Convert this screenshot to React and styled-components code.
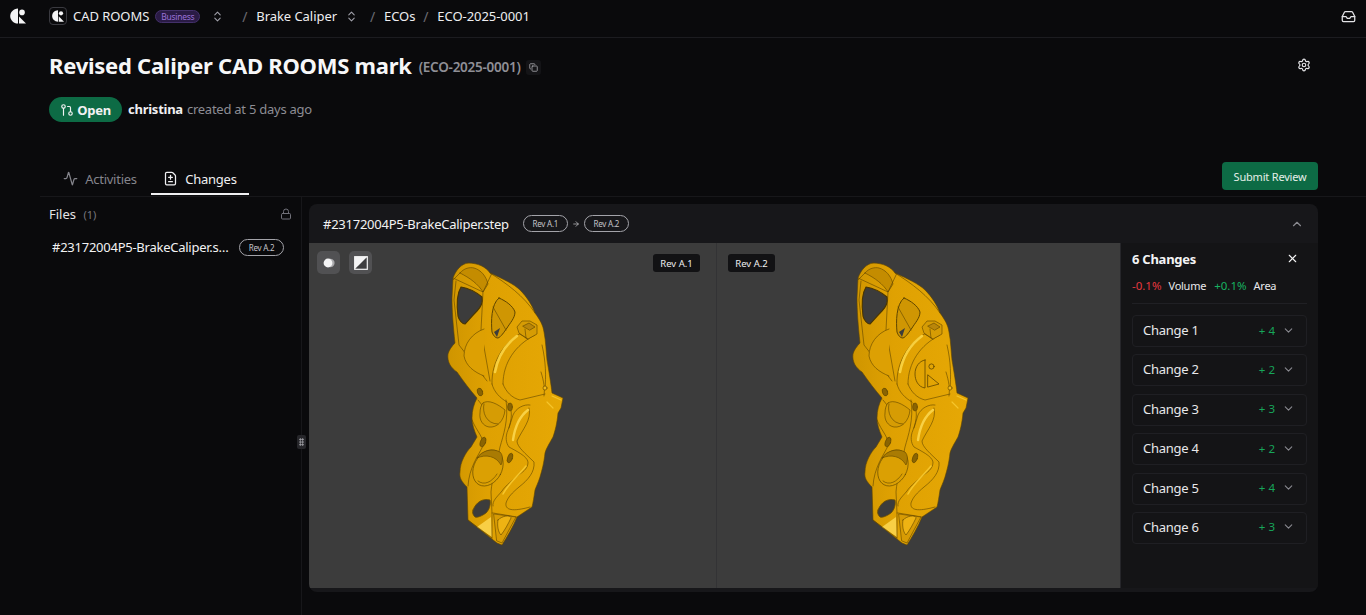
import React from 'react';
import styled, { createGlobalStyle } from 'styled-components';
import {
  Activity,
  ArrowRight,
  ChevronDown,
  ChevronUp,
  ChevronsUpDown,
  Copy,
  FileDiff,
  GitPullRequest,
  Inbox,
  Lock,
  Settings,
  X,
} from 'lucide-react';

const GlobalStyle = createGlobalStyle`
  html, body {
    margin: 0;
    height: 100%;
    background: #0a0a0c;
    overflow: hidden;
  }
  body {
    font-family: "Noto Sans", "Open Sans", sans-serif;
    letter-spacing: -0.25px;
    color: #f2f2f3;
  }
  * { box-sizing: border-box; }
`;

const changes = [
  { name: 'Change 1', count: 4 },
  { name: 'Change 2', count: 2 },
  { name: 'Change 3', count: 3 },
  { name: 'Change 4', count: 2 },
  { name: 'Change 5', count: 4 },
  { name: 'Change 6', count: 3 },
];

const Logo = ({ size = 16 }) => (
  <svg width={size} height={size} viewBox="0 0 16 16" fill="#f4f4f5">
    <path d="M8 0.4 V15.6 C3.4 15.4 0.2 12 0.2 8 C0.2 4 3.4 0.6 8 0.4 Z" />
    <circle cx="12" cy="4.4" r="2.8" />
    <path d="M9 8.4 L16 15.6 H9 Z" />
  </svg>
);

// the part is the same in both panes, the right one carries the engraved mark
const Caliper = ({ mark }) => (
  <svg width="130" height="292" viewBox="440 258 130 292">
    <defs>
      <linearGradient id="body" x1="0" y1="0" x2="1" y2="0">
        <stop offset="0" stopColor="#cf9500" />
        <stop offset="0.35" stopColor="#dfa102" />
        <stop offset="1" stopColor="#e6a805" />
      </linearGradient>
    </defs>
    <g stroke="#5f4500" strokeWidth="0.6" strokeLinejoin="round" strokeLinecap="round" fill="none">
      {/* outline */}
      <path
        fill="url(#body)"
        d="M468 263 C478 263 486 267 490 273 C503 279 514 284 520 290 C527 297 532 305 535 313 C540 320 543 325 544 332 C546 342 546 352 547 360 C549 372 551 384 552 393 L563 398 L561 408 L558 413 C557 424 555 431 553 437 C549 444 546 449 545 453 C544 463 542 470 540 477 C538 483 536 487 535 490 C534 497 533 503 532 507 L517 517 C513 527 507 537 502 545 L497 543 L468 520 L467 487 C462 482 459 478 460 472 C460 462 466 452 471 447 L477 437 C474 430 472 424 472 418 C472 410 474 404 477 398 C470 390 464 382 457 372 C451 368 447 362 448 354 C449 350 452 346 455 343 C453 325 452 310 452 298 L453 278 C456 270 461 264 468 263 Z"
      />
      {/* top strap */}
      <path fill="#c48c00" d="M460 273 C464 268 470 267 474 268 C481 270 486 276 488 284 L483 292 C478 284 470 278 460 273 Z" />
      <path d="M453 278 L483 292 L492 273 M456 281 L454 300 L459 345 L487 381 M483 292 L481 330 L490 381" />
      <path d="M460 273 L453 280" />
      <path d="M490 273 C506 283 524 296 535 313" />
      {/* window holes */}
      <path fill="#3c3c3c" stroke="#4a3600" strokeWidth="1.1" d="M461 287 C468 288 476 292 482 297 C483 303 480 308 477 311 C472 316 468 321 465 324 C462 324 459 320 458 316 C457 308 456 295 461 287 Z" />
      <path fill="#cf9603" strokeWidth="1" d="M499 298 C506 301 513 306 515 312 C515 318 510 323 507 328 C504 332 501 337 498 338 C495 338 493 335 492 332 C491 322 491 304 499 298 Z" />
      <path d="M493 307 L506 330" />
      <path fill="#3c3c3c" stroke="none" d="M494 332 L500 328 L497 337 Z" />
      {/* left boss */}
      <path fill="#dda003" d="M484 329 C472 333 464 344 464 356 C466 366 474 372 484 376" />
      {/* big piston bore */}
      <path d="M492 384 C491 362 505 338 528 330 M503 384 C503 363 515 345 535 335" />
      <path stroke="#f7cf3e" strokeWidth="2.6" d="M495 372 C498 356 506 344 517 336" />
      <path d="M492 384 C494 392 500 398 507 402 M503 384 C506 392 512 398 520 400 L545 394" />
      <path d="M542 345 C546 362 546 376 545 390" />
      {/* bleed nipple */}
      <path fill="#d69c04" d="M519 333 L517 327 L522 321 L530 321 L537 325 L537 334 L528 339 Z" />
      <path fill="#b9860a" d="M523 326 L529 323 L535 327 L530 330 Z" />
      <path d="M520 334 L528 339 M525 329 L526 338" />
      {/* right lug on the flange */}
      <path stroke="#f5c52b" strokeWidth="1.2" d="M552 396 L561 400 M547 402 L553 408" />
      <path d="M541 372 C544 382 545 388 544 396" />
      <circle cx="545" cy="388" r="2" fill="#f0b81a" />
      {/* lower band, S curve */}
      <path d="M508 403 C513 409 512 420 508 430 C505 437 506 443 509 447 C516 451 527 456 528 462 C528 468 524 471 520 474 C513 480 505 486 502 491 C497 497 492 501 493 506" />
      <path d="M530 405 C524 404 516 408 513 415 L509 428" />
      <path d="M529 408 C532 420 522 430 517 441 C517 447 526 454 534 462 C535 472 528 480 519 487 C512 493 508 497 506 503 C505 510 512 512 530 507" />
      <path stroke="#f8d146" strokeWidth="2.4" d="M528 410 C520 416 515 426 513 440" />
      <path stroke="#f5c52b" strokeWidth="1.6" d="M526 466 C518 476 508 484 503 494" />
      {/* middle seams */}
      <path d="M478 400 L486 410 M506 400 C509 420 503 436 500 447 C497 462 492 478 491 492 L492 513" />
      <path d="M472 420 C477 432 484 437 483 446 C478 456 469 468 468 486" />
      {/* upper round recess */}
      <path fill="#d69c04" d="M483 403 C488 399 498 404 505 410 C504 421 497 428 489 427 C483 426 479 420 480 413 C480 409 481 405 483 403 Z" />
      <path fill="none" d="M484 404 C482 412 486 424 498 424" />
      {/* small screw holes */}
      <ellipse cx="483" cy="442" rx="2.6" ry="5" fill="#8a6402" transform="rotate(20 483 442)" />
      <ellipse cx="510" cy="458" rx="2.4" ry="5" fill="#8a6402" transform="rotate(20 510 458)" />
      <ellipse cx="510" cy="407" rx="2.4" ry="4" fill="#8a6402" />
      <ellipse cx="480" cy="392" rx="2.6" ry="4" fill="#8a6402" transform="rotate(-20 480 392)" />
      {/* lower piston bore */}
      <ellipse cx="488" cy="468" rx="14" ry="19" fill="#dba003" transform="rotate(28 488 468)" />
      <path fill="#a97b03" d="M477 458 C482 450 493 448 500 452 C503 455 503 460 501 465 C496 456 486 454 477 458 Z" />
      <path d="M478 481 C484 486 492 482 497 474" />
      {/* lower window and tip */}
      <path fill="#3c3c3c" stroke="#6d4f00" strokeWidth="0.8" d="M473 510 C476 502 483 498 490 500 C491 505 489 510 486 513 C482 516 477 518 475 517 C473 515 472 513 473 510 Z" />
      <path fill="#f8cf45" stroke="none" d="M477 527 L491 517 L492 537 Z" />
      <path d="M468 520 L492 538 M492 513 L492 538 M493 513 L517 517" />
      <path fill="#d79b04" d="M494 514 L516 517 L502 543 L497 541 Z" />
      <path fill="#eeb313" d="M498 520 C503 515 511 515 511 518 C508 524 505 530 501 535 C498 532 497 525 498 520 Z" />
      {/* engraved logo */}
      {mark && (
        <g strokeWidth="0.8">
          <path d="M520 360 V388 C513 387 510 380 510 374 C510 367 514 361 520 360 Z" />
          <circle cx="526.5" cy="366.5" r="2.6" />
          <path d="M523 375 L534 384 L523 387 Z" />
        </g>
      )}
    </g>
  </svg>
);

const App = () => (
  <Page>
    <GlobalStyle />
    <Header>
      <LogoSlot>
        <Logo />
      </LogoSlot>
      <Crumbs>
        <OrgLogo>
          <Logo size={12} />
        </OrgLogo>
        <CrumbText>CAD ROOMS</CrumbText>
        <PlanTag>Business</PlanTag>
        <ChevronsUpDown size={13} color="#a1a1aa" />
        <Slash $left={18}>/</Slash>
        <CrumbText>Brake Caliper</CrumbText>
        <CrumbIcon>
          <ChevronsUpDown size={13} color="#a1a1aa" />
        </CrumbIcon>
        <Slash $left={12}>/</Slash>
        <CrumbText>ECOs</CrumbText>
        <Slash $left={8}>/</Slash>
        <CrumbText>ECO-2025-0001</CrumbText>
      </Crumbs>
      <Inbox size={15} color="#e4e4e7" />
    </Header>

    <Main>
      <TitleRow>
        <Title>Revised Caliper CAD ROOMS mark</Title>
        <TitleId>(ECO-2025-0001)</TitleId>
        <CopyButton>
          <Copy size={9} />
        </CopyButton>
        <SettingsSlot>
          <Settings size={14} color="#e4e4e7" />
        </SettingsSlot>
      </TitleRow>

      <MetaRow>
        <OpenBadge>
          <GitPullRequest size={14} />
          Open
        </OpenBadge>
        <Author>christina</Author>
        <MetaText>created at 5 days ago</MetaText>
      </MetaRow>

      <TabsRow>
        <Tab>
          <Activity size={15} />
          Activities
        </Tab>
        <Tab $active>
          <FileDiff size={15} />
          Changes
        </Tab>
        <SubmitButton>Submit Review</SubmitButton>
      </TabsRow>
    </Main>

    <Body>
      <Sidebar>
        <FilesHead>
          <FilesTitle>
            Files <FilesCount>(1)</FilesCount>
          </FilesTitle>
          <Lock size={12} color="#71717a" />
        </FilesHead>
        <FileRow>
          <FileName>#23172004P5-BrakeCaliper.step</FileName>
          <RevTag>Rev A.2</RevTag>
        </FileRow>
        <Handle>
          <HandleDots />
        </Handle>
      </Sidebar>

      <Panel>
        <PanelHead>
          <PanelFile>#23172004P5-BrakeCaliper.step</PanelFile>
          <RevTag>Rev A.1</RevTag>
          <ArrowRight size={8} color="#d4d4d8" />
          <RevTag>Rev A.2</RevTag>
          <PanelToggle>
            <ChevronUp size={14} />
          </PanelToggle>
        </PanelHead>

        <PanelBody>
          <Viewer>
            <ViewPane>
              <ToolGroup>
                <ToolButton>
                  <svg width="12" height="12" viewBox="0 0 12 12">
                    <circle cx="7.4" cy="6" r="4.2" fill="#a9a9ac" />
                    <circle cx="5" cy="6" r="4.4" fill="#f4f4f5" />
                  </svg>
                </ToolButton>
                <ToolButton>
                  <svg width="14" height="14" viewBox="0 0 14 14">
                    <rect x="0.7" y="0.7" width="12.6" height="12.6" fill="#3d3d3f" stroke="#f4f4f5" strokeWidth="1.2" />
                    <path d="M0.7 13.3 V0.7 H13.3 Z" fill="#f4f4f5" />
                  </svg>
                </ToolButton>
              </ToolGroup>
              <RevLabel $side="right">Rev A.1</RevLabel>
              <Caliper />
            </ViewPane>
            <ViewPane $second>
              <RevLabel $side="left">Rev A.2</RevLabel>
              <Caliper mark />
            </ViewPane>
          </Viewer>

          <ChangesPanel>
            <ChangesHead>
              <ChangesTitle>6 Changes</ChangesTitle>
              <X size={13} color="#f4f4f5" />
            </ChangesHead>
            <Stats>
              <StatValue $color="#e5383f">-0.1%</StatValue>
              <StatName>Volume</StatName>
              <StatValue $color="#17b261">+0.1%</StatValue>
              <StatName>Area</StatName>
            </Stats>
            <ChangeList>
              {changes.map((c) => (
                <ChangeRow key={c.name}>
                  <ChangeName>{c.name}</ChangeName>
                  <ChangeCount>+ {c.count}</ChangeCount>
                  <ChevronDown size={13} color="#8a8a90" />
                </ChangeRow>
              ))}
            </ChangeList>
          </ChangesPanel>
        </PanelBody>
      </Panel>
    </Body>
  </Page>
);

const Page = styled.div`
  width: 1366px;
  height: 615px;
  display: flex;
  flex-direction: column;
  overflow: hidden;
  background: #0a0a0c;
`;

const Header = styled.header`
  height: 38px;
  flex: none;
  display: flex;
  align-items: center;
  padding: 0 10px 5px;
  border-bottom: 1px solid #1c1c20;
`;

const LogoSlot = styled.div`
  width: 39px;
  display: flex;
  align-items: center;
`;

const Crumbs = styled.nav`
  flex: 1;
  display: flex;
  align-items: center;
`;

const OrgLogo = styled.span`
  width: 18px;
  height: 18px;
  margin-right: 6px;
  display: flex;
  align-items: center;
  justify-content: center;
  border: 1px solid #3a3a40;
  border-radius: 4px;
`;

const CrumbText = styled.span`
  font-size: 13px;
  letter-spacing: -0.05px;
  color: #eeeef0;
`;

const CrumbIcon = styled.span`
  margin-left: 8px;
  display: flex;
`;

const PlanTag = styled.span`
  width: 45px;
  height: 13px;
  margin: 0 11px 0 6px;
  display: flex;
  align-items: center;
  justify-content: center;
  font-size: 8.5px;
  color: #9a72d8;
  background: #2a1b45;
  border: 1px solid #43306a;
  border-radius: 7px;
`;

const Slash = styled.span`
  margin: 0 9px 0 ${(p) => p.$left}px;
  font-size: 14px;
  color: #6b6b72;
`;

const Main = styled.div`
  flex: none;
  padding: 0 48px 0 49px;
`;

const TitleRow = styled.div`
  height: 54px;
  display: flex;
  align-items: center;
`;

const Title = styled.h1`
  margin: 0;
  font-size: 22px;
  font-weight: 700;
  color: #f7f7f8;
`;

const TitleId = styled.span`
  margin: 3px 0 0 7px;
  font-size: 13.5px;
  font-weight: 600;
  color: #8f8f96;
`;

const CopyButton = styled.span`
  width: 15px;
  height: 15px;
  margin: 4px 0 0 5px;
  display: flex;
  align-items: center;
  justify-content: center;
  color: #b4b4ba;
  background: #141417;
  border-radius: 3px;
`;

const SettingsSlot = styled.span`
  margin-left: auto;
  margin-right: 7px;
  display: flex;
`;

const MetaRow = styled.div`
  height: 25px;
  margin-top: 5px;
  padding-bottom: 0;
  display: flex;
  align-items: center;
  font-size: 13px;
  line-height: 22px;
`;

const OpenBadge = styled.span`
  width: 73px;
  height: 25px;
  margin-right: 6px;
  display: flex;
  align-items: center;
  justify-content: center;
  gap: 3px;
  font-size: 13px;
  font-weight: 700;
  color: #f2f2f3;
  background: #0d6b45;
  border-radius: 12.5px;
`;

const Author = styled.span`
  margin-right: 4px;
  margin-bottom: 1px;
  font-weight: 700;
  color: #f0f0f2;
`;

const MetaText = styled.span`
  margin-bottom: 1px;
  color: #8d8d94;
`;

const TabsRow = styled.div`
  height: 55px;
  margin-top: 20px;
  margin-left: -9px;
  margin-right: -48px;
  padding: 0 48px 1px 9px;
  display: flex;
  align-items: flex-end;
  border-bottom: 1px solid #17171a;
`;

const Tab = styled.div`
  width: ${(p) => (p.$active ? '98px' : '102px')};
  height: 31px;
  display: flex;
  align-items: center;
  justify-content: center;
  gap: 7px;
  font-size: 13px;
  color: ${(p) => (p.$active ? '#f0f0f2' : '#85858c')};
  border-bottom: 2px solid ${(p) => (p.$active ? '#f0f0f2' : 'transparent')};
`;

const SubmitButton = styled.button`
  width: 96px;
  height: 28px;
  margin-left: auto;
  margin-top: 20px;
  align-self: flex-start;
  padding: 0;
  font-family: inherit;
  font-size: 11px;
  letter-spacing: -0.2px;
  color: #e6efe9;
  background: #0d6b45;
  border: none;
  border-radius: 4px;
`;

const Body = styled.div`
  flex: 1;
  min-height: 0;
  display: grid;
  grid-template-columns: 262px 1016px;
  padding-left: 40px;
`;

const Sidebar = styled.aside`
  position: relative;
  padding: 0 9px 0 9px;
  border-right: 1px solid #17171a;
`;

const FilesHead = styled.div`
  height: 33px;
  display: flex;
  align-items: center;
  justify-content: space-between;
`;

const FilesTitle = styled.span`
  font-size: 13px;
  letter-spacing: 0;
  color: #e4e4e7;
`;

const FilesCount = styled.span`
  margin-left: 4px;
  font-size: 11px;
  color: #77777e;
`;

const FileRow = styled.div`
  margin-top: 8px;
  padding-left: 3px;
  display: flex;
  align-items: center;
  gap: 10px;
`;

const FileName = styled.span`
  flex: none;
  width: 177px;
  overflow: hidden;
  white-space: nowrap;
  text-overflow: ellipsis;
  font-size: 13px;
  color: #f2f2f3;
`;

const RevTag = styled.span`
  width: 45px;
  height: 17px;
  flex: none;
  display: flex;
  align-items: center;
  justify-content: center;
  font-size: 8px;
  color: #c4c4c9;
  border: 1px solid #a3a3a9;
  border-radius: 9px;
`;

const Handle = styled.div`
  position: absolute;
  right: -5px;
  top: 238px;
  width: 9px;
  height: 14px;
  display: flex;
  align-items: center;
  justify-content: center;
  background: #26262a;
  border-radius: 2px;
`;

const HandleDots = styled.span`
  width: 5px;
  height: 8px;
  background-image: radial-gradient(#a8a8ae 0.8px, transparent 1px);
  background-size: 2.5px 2.7px;
`;

const Panel = styled.section`
  margin: 7px 0 23px 7px;
  display: flex;
  flex-direction: column;
  background: #17171a;
  border-radius: 8px;
  overflow: hidden;
`;

const PanelHead = styled.div`
  height: 39px;
  flex: none;
  padding: 0 14px;
  display: flex;
  align-items: center;
  gap: 4px;
`;

const PanelFile = styled.span`
  margin-right: 10px;
  font-size: 13px;
  color: #f2f2f3;
`;

const PanelToggle = styled.span`
  margin-left: auto;
  display: flex;
  color: #8a8a90;
`;

const PanelBody = styled.div`
  flex: 1;
  min-height: 0;
  display: flex;
  padding-bottom: 4px;
`;

const Viewer = styled.div`
  width: 811px;
  display: flex;
  background: #3c3c3c;
`;

const ViewPane = styled.div`
  flex: ${(p) => (p.$second ? '0 0 404px' : '0 0 407px')};
  position: relative;
  padding-top: 15px;
  padding-left: ${(p) => (p.$second ? '128px' : '131px')};
  border-left: ${(p) => (p.$second ? '1px solid #333335' : 'none')};
`;

const ToolGroup = styled.div`
  position: absolute;
  top: 8px;
  left: 8px;
  display: flex;
  gap: 9px;
`;

const ToolButton = styled.span`
  width: 23px;
  height: 23px;
  display: flex;
  align-items: center;
  justify-content: center;
  background: #515153;
  border-radius: 5px;
`;

const RevLabel = styled.span`
  position: absolute;
  top: 11px;
  ${(p) => (p.$side === 'right' ? 'right: 16px;' : 'left: 11px;')}
  width: 47px;
  height: 18px;
  display: flex;
  align-items: center;
  justify-content: center;
  font-size: 9.5px;
  letter-spacing: 0;
  color: #eeeeef;
  background: #121214;
  border-radius: 3px;
`;

const ChangesPanel = styled.div`
  flex: 1;
  padding: 0 11px;
  background: #141416;
  border-left: 1px solid #26262a;
`;

const ChangesHead = styled.div`
  height: 31px;
  display: flex;
  align-items: center;
  justify-content: space-between;
  padding-right: 8px;
`;

const ChangesTitle = styled.span`
  font-size: 13px;
  font-weight: 700;
  color: #f4f4f5;
`;

const Stats = styled.div`
  height: 30px;
  padding-bottom: 6px;
  display: flex;
  align-items: center;
  font-size: 11px;
  border-bottom: 1px solid #202024;
`;

const StatValue = styled.span`
  margin-right: 7px;
  font-size: 11.5px;
  letter-spacing: 0;
  color: ${(p) => p.$color};
`;

const StatName = styled.span`
  margin-right: 8px;
  color: #e8e8ea;
`;

const ChangeList = styled.div`
  margin-top: 11px;
  display: flex;
  flex-direction: column;
  gap: 7.4px;
`;

const ChangeRow = styled.div`
  height: 32px;
  padding: 0 11px 2px 10px;
  display: flex;
  align-items: center;
  border: 1px solid #1f1f23;
  border-radius: 4px;
`;

const ChangeName = styled.span`
  flex: 1;
  font-size: 13px;
  color: #e8e8ea;
`;

const ChangeCount = styled.span`
  margin-right: 7px;
  font-size: 11.5px;
  letter-spacing: 0;
  color: #17a65a;
`;

export default App;
